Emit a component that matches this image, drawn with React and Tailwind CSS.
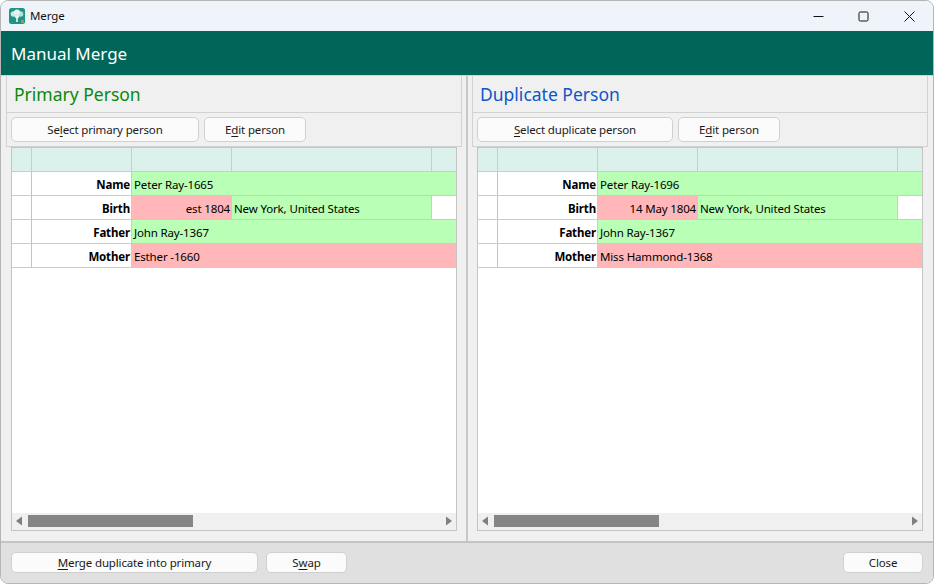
import React from "react";

const Accel = ({ children }) => <span className="underline underline-offset-2 decoration-1">{children}</span>;

const Btn = ({ className = "", children }) => (
  <div className={"flex items-center justify-center rounded-[5px] border border-[#d0d0d0] bg-[#fbfbfb] text-[11.5px] tracking-[-0.15px] text-[#1a1a1a] " + className}>
    {children}
  </div>
);

const line = "border-r border-b border-[#a9dccf]";
const Cell = ({ className = "", children }) => <div className={"flex items-center overflow-hidden whitespace-nowrap pt-[2px] text-[11.5px] tracking-[-0.15px] text-black " + line + " " + className}>{children}</div>;

const green = "bg-[#b9ffb6]";
const red = "bg-[#ffb7b9]";

function Row({ label, children }) {
  return (
    <>
      <div className="border-r border-b border-r-[#c4c4c4] border-b-[#a9dccf] bg-white" />
      <Cell className="justify-end bg-white pr-[1px] font-bold">{label}</Cell>
      {children}
    </>
  );
}

function Arrow({ dir }) {
  return (
    <svg width="8" height="10" viewBox="0 0 8 10" className="shrink-0">
      <path d={dir === "l" ? "M7 0.5V9.5L1 5Z" : "M1 0.5V9.5L7 5Z"} fill="#7f7f7f" />
    </svg>
  );
}

function Panel({ title, titleColor, selectBtn, selectW, editW, rows, dateText }) {
  return (
    <div className="flex min-w-0 flex-1 flex-col">
      <div className="flex h-[37px] shrink-0 items-center border-b border-l border-r border-[#d2d2d2] pl-[7px] pt-[2px] bg-[#f0f0f0]">
        <span className={"text-[17.5px] leading-none " + titleColor}>{title}</span>
      </div>
      <div className="flex h-[34px] shrink-0 items-center gap-[5px] border-b border-l border-r border-[#d2d2d2] pl-1 bg-[#f0f0f0]">
        <Btn className={"h-[25px] " + selectW}>{selectBtn}</Btn>
        <Btn className={"h-[25px] " + editW}><span>E<Accel>d</Accel>it person</span></Btn>
      </div>
      <div className="ml-[5px] mr-[5px] mb-[10px] flex min-h-0 flex-1 flex-col border border-[#c4c4c4] bg-white">
        <div className="grid flex-1 auto-rows-[24px] grid-cols-[20px_100px_100px_200px_1fr] content-start">
          <div className={"h-[24px] bg-[#dcf0ec] " + line} />
          <div className={"h-[24px] bg-[#dcf0ec] " + line} />
          <div className={"h-[24px] bg-[#dcf0ec] " + line} />
          <div className={"h-[24px] bg-[#dcf0ec] " + line} />
          <div className="h-[24px] border-b border-[#a9dccf] bg-[#dcf0ec]" />
          <Row label="Name">
            <Cell className={"col-span-3 border-r-0 pl-[2px] " + green}>{rows[0]}</Cell>
          </Row>
          <Row label="Birth">
            <Cell className={"justify-end pr-[1px] " + red}>{dateText}</Cell>
            <Cell className={"pl-[2px] " + green}>New York, United States</Cell>
            <div className="border-b border-[#a9dccf] bg-white" />
          </Row>
          <Row label="Father">
            <Cell className={"col-span-3 border-r-0 pl-[2px] " + green}>{rows[1]}</Cell>
          </Row>
          <Row label="Mother">
            <Cell className={"col-span-3 border-r-0 pl-[2px] " + red}>{rows[2]}</Cell>
          </Row>
        </div>
        <div className="flex h-[17px] shrink-0 items-center bg-[#f0f0f0] pb-[1px] pl-[3px] pr-[3px]">
          <Arrow dir="l" />
          <div className="ml-[5px] h-[12px] w-[165px] bg-[#858585]" />
          <div className="flex-1" />
          <Arrow dir="r" />
        </div>
      </div>
    </div>
  );
}

export default function App() {
  return (
    <div
      className="flex h-[584px] w-[934px] flex-col overflow-hidden rounded-[8px] border border-[#b5b5b5] bg-[#f0f0f0]"
      style={{ fontFamily: '"Noto Sans", "Open Sans", sans-serif' }}
    >
      <div className="flex h-[30px] shrink-0 items-center bg-[#eff4fa] pl-2">
        <svg width="16" height="16" viewBox="0 0 16 16" className="shrink-0">
          <rect width="16" height="16" rx="2.5" fill="#1f9484" />
          <circle cx="4.5" cy="6" r="2.8" fill="#cfe9e3" />
          <circle cx="11.5" cy="6" r="2.8" fill="#b9e0d7" />
          <circle cx="8" cy="4.5" r="3" fill="#e6f5f1" />
          <circle cx="8" cy="8" r="2.4" fill="#d6eee8" />
          <path d="M7.2 8h1.6v6H7.2z" fill="#eef8f5" />
          <rect x="12" y="12" width="3" height="3" fill="#9c9a55" />
        </svg>
        <span className="ml-[5px] text-[11.5px] tracking-[-0.1px] text-[#111]">Merge</span>
        <div className="flex-1" />
        <svg width="11" height="11" viewBox="0 0 11 11" className="mr-[34px]"><path d="M0.5 5.5H10.5" stroke="#111" strokeWidth="1" /></svg>
        <svg width="11" height="11" viewBox="0 0 11 11" className="mr-[35px]"><rect x="1" y="1" width="9" height="9" rx="1.3" fill="none" stroke="#111" strokeWidth="1" /></svg>
        <svg width="11" height="11" viewBox="0 0 11 11" className="mr-[18px]"><path d="M0.5 0.5L10.5 10.5M10.5 0.5L0.5 10.5" stroke="#111" strokeWidth="1" /></svg>
      </div>
      <div className="flex h-[44px] shrink-0 items-center bg-[#00665a] pl-[10px] pt-[2px] text-[17px] text-white">Manual Merge</div>
      <div className="flex min-h-0 flex-1 border-t border-[#d2d2d2] px-[5px]">
        <Panel
          title="Primary Person"
          titleColor="text-[#0a8a0a]"
          selectBtn={<span>Se<Accel>l</Accel>ect primary person</span>}
          selectW="w-[188px]"
          editW="w-[102px]"
          dateText="est 1804"
          rows={["Peter Ray-1665", "John Ray-1367", "Esther -1660"]}
        />
        <div className="mx-[4px] w-[2px] shrink-0 bg-[#c8c8c8]" />
        <Panel
          title="Duplicate Person"
          titleColor="text-[#0b57c9]"
          selectBtn={<span><Accel>S</Accel>elect duplicate person</span>}
          selectW="w-[196px]"
          editW="w-[102px]"
          dateText="14 May 1804"
          rows={["Peter Ray-1696", "John Ray-1367", "Miss Hammond-1368"]}
        />
      </div>
      <div className="flex h-[42px] shrink-0 items-center gap-2 border-t-2 border-[#c4c4c4] bg-[#e0e0e0] px-[10px] pb-[1px]">
        <Btn className="h-[21px] w-[247px]"><span><Accel>M</Accel>erge duplicate into primary</span></Btn>
        <Btn className="h-[21px] w-[81px]"><span>S<Accel>w</Accel>ap</span></Btn>
        <div className="flex-1" />
        <Btn className="h-[21px] w-[80px]">Close</Btn>
      </div>
    </div>
  );
}
